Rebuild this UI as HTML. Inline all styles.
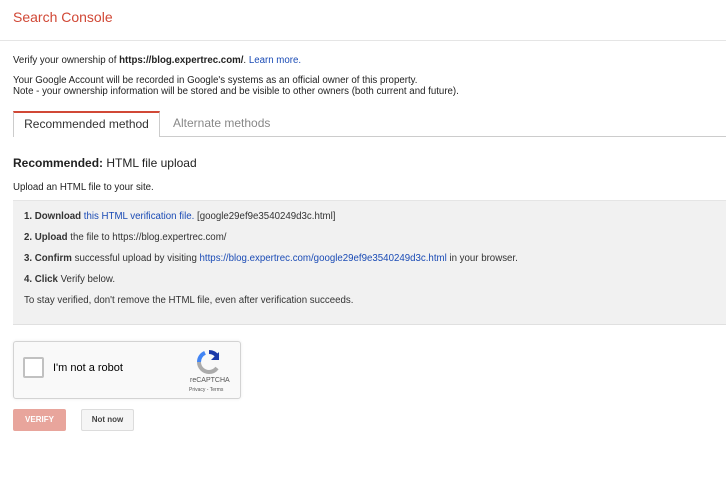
<!DOCTYPE html>
<html><head><style>
*{margin:0;padding:0;box-sizing:border-box}
body{width:726px;height:498px;background:#fff;font-family:"Liberation Sans",Arial,sans-serif;color:#222;position:relative;overflow:hidden}
.a{position:absolute;white-space:nowrap}
.s{font-size:9.7px}
a{color:#1a4bb5;text-decoration:none}
</style></head><body>
<div class="a" style="left:13px;top:9px;font-size:14px;color:#d14836">Search Console</div>
<div class="a" style="left:0;top:40px;width:726px;height:1px;background:#e5e5e5"></div>
<div class="a s" style="left:13px;top:55px">Verify your ownership of <b>https://blog.expertrec.com/</b>. <a>Learn more.</a></div>
<div class="a s" style="left:13px;top:75px;line-height:11px">Your Google Account will be recorded in Google's systems as an official owner of this property.<br>Note - your ownership information will be stored and be visible to other owners (both current and future).</div>
<div class="a" style="left:13px;top:136px;width:713px;height:1px;background:#ccc"></div>
<div class="a" style="left:13px;top:111px;width:147px;height:26px;background:#fff;border:1px solid #ccc;border-top:2px solid #d14836;border-bottom:none;font-size:12px;color:#333;padding-top:4px;text-align:center">Recommended method</div>
<div class="a" style="left:173px;top:116px;font-size:12px;color:#888">Alternate methods</div>
<div class="a" style="left:13px;top:156px;font-size:12px;color:#222"><b>Recommended:</b> HTML file upload</div>
<div class="a s" style="left:13px;top:182px">Upload an HTML file to your site.</div>
<div class="a" style="left:13px;top:200px;width:713px;height:125px;background:#f1f1f1;border-top:1px solid #e5e5e5;border-bottom:1px solid #e0e0e0"></div>
<div class="a s" style="left:24px;top:211px;color:#333"><b>1. Download</b> <a>this HTML verification file.</a> [google29ef9e3540249d3c.html]</div>
<div class="a s" style="left:24px;top:232px;color:#333"><b>2. Upload</b> the file to https://blog.expertrec.com/</div>
<div class="a s" style="left:24px;top:253px;color:#333"><b>3. Confirm</b> successful upload by visiting <a>https://blog.expertrec.com/google29ef9e3540249d3c.html</a> in your browser.</div>
<div class="a s" style="left:24px;top:274px;color:#333"><b>4. Click</b> Verify below.</div>
<div class="a s" style="left:24px;top:295px;color:#333">To stay verified, don't remove the HTML file, even after verification succeeds.</div>
<div class="a" style="left:13px;top:341px;width:228px;height:58px;background:#f9f9f9;border:1px solid #d3d3d3;border-radius:3px;box-shadow:0 0 3px rgba(0,0,0,.08)"></div>
<div class="a" style="left:23px;top:357px;width:21px;height:21px;background:#fff;border:2px solid #c1c1c1;border-radius:2px"></div>
<div class="a" style="left:53px;top:362px;font-size:11px;color:#000">I'm not a robot</div>
<svg class="a" style="left:196px;top:349px" width="26" height="26" viewBox="0 0 26 26">
<path d="M13 3a10 10 0 0 1 8.5 4.8" stroke="#1c3aa9" stroke-width="4" fill="none"/>
<path d="M23 3v8h-8z" fill="#1c3aa9"/>
<path d="M3 13a10 10 0 0 1 6-9.2" stroke="#4285f4" stroke-width="4" fill="none"/>
<path d="M13 23a10 10 0 0 1-10-10" stroke="#ababab" stroke-width="4" fill="none"/>
<path d="M13 23a10 10 0 0 0 8-4" stroke="#ababab" stroke-width="4" fill="none"/>
</svg>
<div class="a" style="left:190px;top:377px;font-size:7px;color:#555">reCAPTCHA</div>
<div class="a" style="left:189px;top:387px;font-size:5px;color:#555">Privacy - Terms</div>
<div class="a" style="left:13px;top:409px;width:53px;height:22px;background:#e8a59c;border-radius:2px;color:#fff;font-size:8px;font-weight:bold;text-align:center;line-height:22px">VERIFY</div>
<div class="a" style="left:81px;top:409px;width:53px;height:22px;background:#f5f5f5;border:1px solid #dcdcdc;border-radius:2px;color:#444;font-size:8px;font-weight:bold;text-align:center;line-height:20px">Not now</div>
</body></html>
